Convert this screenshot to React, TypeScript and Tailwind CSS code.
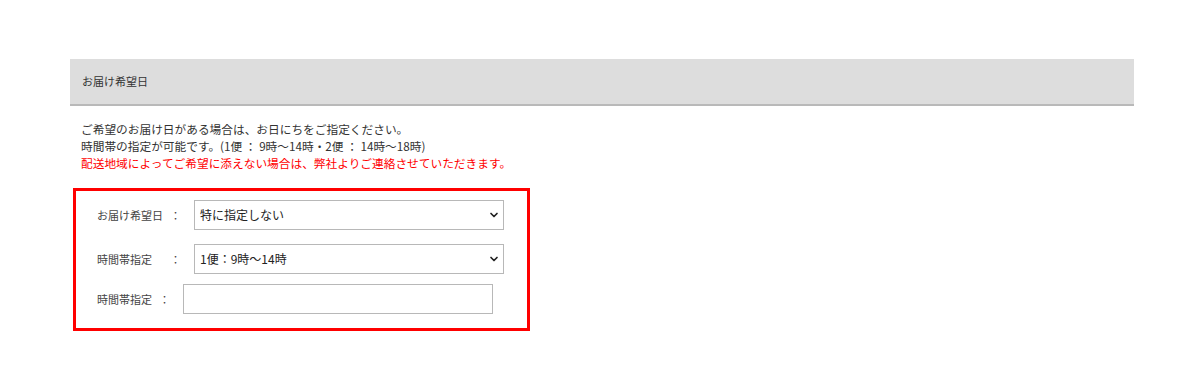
import { ChevronDown } from "lucide-react";

const font = { fontFamily: '"Noto Sans CJK JP", "Noto Sans", sans-serif' };

const SelectBox = ({ value }: { value: string }) => (
  <div className="relative h-[30px] w-[310px] border border-[#b8b8b8] bg-white">
    <div className="flex h-full items-center pl-[5px] text-[12px] text-[#222]">{value}</div>
    <ChevronDown
      className="absolute right-[3px] top-1/2 -translate-y-1/2 text-[#222]"
      size={12}
      strokeWidth={3.4}
    />
  </div>
);

export default function App() {
  return (
    <div className="min-h-[392px] w-[1200px] bg-white pt-[59px]" style={font}>
      <div className="ml-[70px] w-[1064px]">
        <div className="flex h-[47px] items-center border-b-2 border-[#b9b9b9] bg-[#dddddd] pl-[12px] text-[11px] text-[#333]">
          お届け希望日
        </div>
        <div className="mt-[14px] pl-[11px] text-[11.7px] leading-[17px] text-[#333]">
          <p>ご希望のお届け日がある場合は、お日にちをご指定ください。</p>
          <p>時間帯の指定が可能です。(1便 ： 9時～14時・2便 ： 14時～18時)</p>
          <p className="text-[#ff0000]">配送地域によってご希望に添えない場合は、弊社よりご連絡させていただきます。</p>
        </div>
        <div className="ml-[3px] mt-[17px] h-[143px] w-[457px] border-[3px] border-[#ff0000] pl-[21px] pt-[9px]">
          <div className="flex items-center">
            <span className="w-[73px] text-[11px] text-[#444]">お届け希望日</span>
            <span className="w-[24px] text-[11px] text-[#444]">：</span>
            <SelectBox value="特に指定しない" />
          </div>
          <div className="mt-[14px] flex items-center">
            <span className="w-[73px] text-[11px] text-[#444]">時間帯指定</span>
            <span className="w-[24px] text-[11px] text-[#444]">：</span>
            <SelectBox value="1便：9時～14時" />
          </div>
          <div className="mt-[10px] flex items-center">
            <span className="w-[62px] text-[11px] text-[#444]">時間帯指定</span>
            <span className="w-[24px] text-[11px] text-[#444]">：</span>
            <div className="h-[30px] w-[310px] border border-[#b8b8b8] bg-white" />
          </div>
        </div>
      </div>
    </div>
  );
}
